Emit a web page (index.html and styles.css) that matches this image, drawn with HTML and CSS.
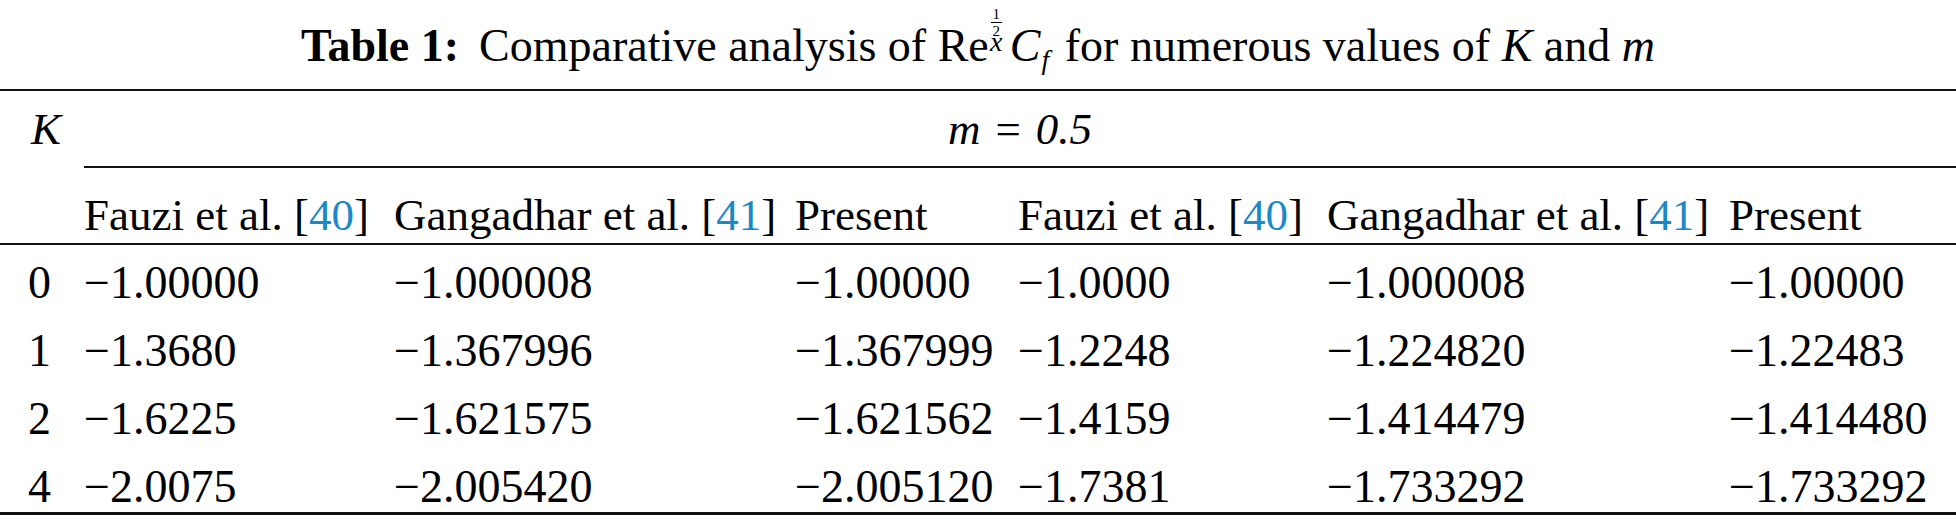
FILE: index.html
```html
<!DOCTYPE html>
<html lang="en">
<head>
<meta charset="utf-8">
<title>Table 1</title>
<link rel="stylesheet" href="styles.css">
</head>
<body>
<div class="page">
  <div class="caption">
    <b class="label">Table 1:</b>Comparative analysis of Re<span class="scripts"><span class="frac"><span class="num">1</span><span class="bar"></span><span class="num">2</span></span><i class="subx">x</i></span><i class="cvar">C</i><i class="subf">f</i> for numerous values of <i>K</i> and <i>m</i>
  </div>
  <table class="tbl">
    <colgroup>
      <col class="c0"><col class="c1"><col class="c2"><col class="c3"><col class="c4"><col class="c5"><col class="c6">
    </colgroup>
    <thead>
      <tr class="grp">
        <th class="kcell" rowspan="2"><i>K</i></th>
        <th class="mcell" colspan="6"><i>m</i><span class="eq">=</span><i>0.5</i></th>
      </tr>
      <tr class="hdr">
        <th>Fauzi et al. [<a class="ref">40</a>]</th>
        <th>Gangadhar et al. [<a class="ref">41</a>]</th>
        <th>Present</th>
        <th>Fauzi et al. [<a class="ref">40</a>]</th>
        <th>Gangadhar et al. [<a class="ref">41</a>]</th>
        <th>Present</th>
      </tr>
    </thead>
    <tbody>
      <tr class="first">
        <td class="lbl">0</td><td>−1.00000</td><td>−1.000008</td><td>−1.00000</td><td>−1.0000</td><td>−1.000008</td><td>−1.00000</td>
      </tr>
      <tr>
        <td class="lbl">1</td><td>−1.3680</td><td>−1.367996</td><td>−1.367999</td><td>−1.2248</td><td>−1.224820</td><td>−1.22483</td>
      </tr>
      <tr>
        <td class="lbl">2</td><td>−1.6225</td><td>−1.621575</td><td>−1.621562</td><td>−1.4159</td><td>−1.414479</td><td>−1.414480</td>
      </tr>
      <tr class="last">
        <td class="lbl">4</td><td>−2.0075</td><td>−2.005420</td><td>−2.005120</td><td>−1.7381</td><td>−1.733292</td><td>−1.733292</td>
      </tr>
    </tbody>
  </table>
</div>
</body>
</html>
```
FILE: styles.css
```css
html, body {
  margin: 0;
  padding: 0;
  background: #ffffff;
}

body {
  font-family: "Liberation Serif", "Times New Roman", serif;
  color: #000000;
  font-size: 45px;
}

.page {
  width: 1956px;
}

.caption {
  height: 89px;
  box-sizing: border-box;
  padding-top: 8px;
  font-size: 46px;
  line-height: 46px;
  text-align: center;
  white-space: nowrap;
}

.caption .label {
  font-weight: bold;
  margin-right: 20px;
}

.scripts {
  display: inline-block;
  font-size: 28px;
  line-height: 16px;
  vertical-align: 10px;
  margin-left: 1px;
  margin-right: 7px;
}

.frac {
  display: flex;
  flex-direction: column;
  align-items: center;
  width: 13px;
  margin-bottom: -3px;
}

.frac .num {
  font-size: 15px;
  line-height: 12px;
}

.frac .bar {
  display: block;
  width: 11px;
  height: 1.5px;
  background: #000;
  margin: 1.5px 0;
}

.subx {
  font-style: italic;
}

.cvar {
  font-style: italic;
}

.subf {
  font-size: 28px;
  vertical-align: -8px;
  margin-left: 1px;
  margin-right: 4px;
}

.tbl {
  width: 1956px;
  table-layout: fixed;
  border-collapse: separate;
  border-spacing: 0;
}

.c0 { width: 84px; }
.c1 { width: 310px; }
.c2 { width: 401px; }
.c3 { width: 223px; }
.c4 { width: 309px; }
.c5 { width: 402px; }
.c6 { width: 227px; }

.tbl th,
.tbl td {
  font-weight: normal;
  text-align: left;
  line-height: 44px;
  padding: 0;
  white-space: nowrap;
  vertical-align: top;
}

.grp th {
  border-top: 2px solid #111;
  padding-top: 16px;
  padding-bottom: 15px;
}

.tbl th.kcell {
  padding-left: 31px;
  border-bottom: 2px solid #111;
}

.tbl th.mcell {
  text-align: center;
  border-bottom: 2px solid #111;
}

.eq {
  margin: 0 15px;
}

.hdr th {
  padding-top: 25px;
  padding-bottom: 6px;
  border-bottom: 2px solid #111;
}

.ref {
  color: #1c89c7;
  text-decoration: none;
}

.tbl td {
  font-size: 46px;
  padding-top: 9px;
  padding-bottom: 15px;
}

.tbl td.lbl {
  padding-left: 28px;
}

.tbl .first td {
  padding-top: 16px;
  padding-bottom: 15px;
}

.tbl .last td {
  padding-top: 9px;
  padding-bottom: 3px;
  border-bottom: 3px solid #111;
}
```
